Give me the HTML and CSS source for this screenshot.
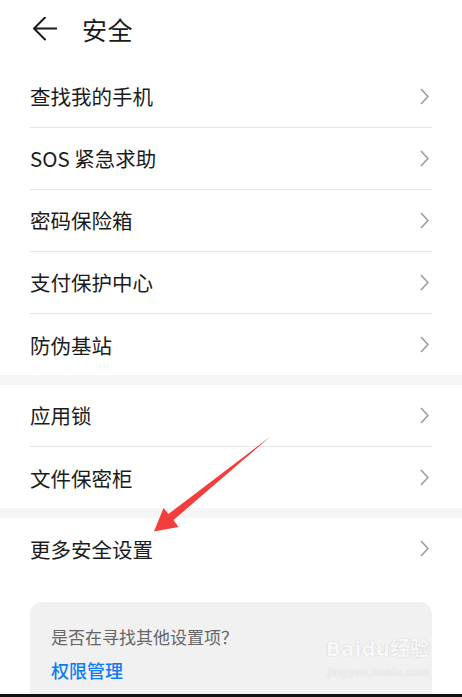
FILE: index.html
```html
<!DOCTYPE html>
<html lang="zh">
<head>
<meta charset="utf-8">
<title>安全</title>
<link rel="stylesheet" href="styles.css">
</head>
<body>
<div class="page">
  <header class="header">
    <svg class="back" width="24" height="24" viewBox="0 0 24 24" aria-hidden="true">
      <path d="M1 11.5 H23.5 M12 0.5 L1 11.5 L12 22.5" fill="none" stroke="#1b1b1b" stroke-width="2" stroke-linecap="round" stroke-linejoin="round"/>
    </svg>
    <h1 class="title">安全</h1>
  </header>

  <section class="group">
    <div class="row"><span class="label">查找我的手机</span><svg class="chev" width="9" height="17" viewBox="0 0 9 17"><path d="M1 1 L8 8.5 L1 16" fill="none" stroke="#9b9b9b" stroke-width="1.6"/></svg></div>
    <div class="row"><span class="label">SOS 紧急求助</span><svg class="chev" width="9" height="17" viewBox="0 0 9 17"><path d="M1 1 L8 8.5 L1 16" fill="none" stroke="#9b9b9b" stroke-width="1.6"/></svg></div>
    <div class="row"><span class="label">密码保险箱</span><svg class="chev" width="9" height="17" viewBox="0 0 9 17"><path d="M1 1 L8 8.5 L1 16" fill="none" stroke="#9b9b9b" stroke-width="1.6"/></svg></div>
    <div class="row"><span class="label">支付保护中心</span><svg class="chev" width="9" height="17" viewBox="0 0 9 17"><path d="M1 1 L8 8.5 L1 16" fill="none" stroke="#9b9b9b" stroke-width="1.6"/></svg></div>
    <div class="row"><span class="label">防伪基站</span><svg class="chev" width="9" height="17" viewBox="0 0 9 17"><path d="M1 1 L8 8.5 L1 16" fill="none" stroke="#9b9b9b" stroke-width="1.6"/></svg></div>
  </section>
  <div class="band"></div>
  <section class="group">
    <div class="row"><span class="label">应用锁</span><svg class="chev" width="9" height="17" viewBox="0 0 9 17"><path d="M1 1 L8 8.5 L1 16" fill="none" stroke="#9b9b9b" stroke-width="1.6"/></svg></div>
    <div class="row"><span class="label">文件保密柜</span><svg class="chev" width="9" height="17" viewBox="0 0 9 17"><path d="M1 1 L8 8.5 L1 16" fill="none" stroke="#9b9b9b" stroke-width="1.6"/></svg></div>
  </section>
  <div class="band"></div>
  <section class="group">
    <div class="row"><span class="label">更多安全设置</span><svg class="chev" width="9" height="17" viewBox="0 0 9 17"><path d="M1 1 L8 8.5 L1 16" fill="none" stroke="#9b9b9b" stroke-width="1.6"/></svg></div>
  </section>

  <div class="card">
    <p class="hint">是否在寻找其他设置项？</p>
    <a class="link">权限管理</a>
    <div class="watermark">
      <span class="wm-main">Bai<span class="wm-du">du</span>经验</span>
      <span class="wm-sub">jingyan.baidu.com</span>
    </div>
  </div>

  <svg class="annot" width="462" height="697" viewBox="0 0 462 697" aria-hidden="true">
    <polygon points="271,436 173.5,520 178.5,527 154,531.5 163.5,508 168.5,514" fill="#f53d3d"/>
  </svg>
  <div class="navbar"></div>
</div>
</body>
</html>
```
FILE: styles.css
```css
* { box-sizing: border-box; }
html, body {
  margin: 0;
  padding: 0;
  background: #ffffff;
  overflow: hidden;
}
body {
  font-family: "Noto Sans CJK SC", "Noto Sans", sans-serif;
  color: #1b1b1b;
}
.page {
  position: relative;
  width: 462px;
  height: 697px;
  overflow: hidden;
}
.header {
  display: flex;
  align-items: center;
  height: 58px;
  padding-left: 33px;
  margin-bottom: 8px;
}
.back { display: block; }
.title {
  margin: 0 0 0 25px;
  font-size: 25px;
  font-weight: 400;
  line-height: 30px;
  letter-spacing: 0.5px;
}
.group {
  padding: 0 30px;
}
.row {
  display: flex;
  align-items: center;
  justify-content: space-between;
  height: 62px;
  border-bottom: 1px solid #e6e6e6;
  padding-bottom: 1px;
}
.row:last-child { border-bottom: none; height: 61px; padding-bottom: 0; }
.label {
  font-size: 20.5px;
  line-height: 26px;
  color: #1b1b1b;
}
.chev {
  display: block;
  margin-right: 3px;
}
.band {
  height: 10px;
  background: #f5f5f5;
}
.card {
  position: relative;
  margin: 23px 30px 0;
  padding: 24px 21px 40px;
  background: #f1f1f1;
  border-radius: 12px;
}
.hint {
  margin: 0;
  font-size: 17px;
  line-height: 22px;
  color: #666666;
}
.link {
  display: block;
  margin-top: 11px;
  font-size: 18px;
  line-height: 22px;
  font-weight: 500;
  color: #0b7cf3;
}
.watermark {
  position: absolute;
  right: 2px;
  top: 34px;
  display: flex;
  flex-direction: column;
  align-items: flex-end;
  font-family: "DejaVu Sans", "Noto Sans CJK SC", sans-serif;
  color: #f7f7f7;
  text-shadow: 0 0 1px #d0d0d0, 0 0 1px #d0d0d0;
}
.wm-main {
  font-size: 20px;
  font-weight: 700;
  line-height: 26px;
}
.wm-sub {
  font-family: "DejaVu Serif", serif;
  font-size: 11px;
  line-height: 14px;
  margin-top: 4px;
}
.annot {
  position: absolute;
  left: 0;
  top: 0;
  pointer-events: none;
}
.navbar {
  position: absolute;
  left: 0;
  right: 0;
  bottom: 0;
  height: 3px;
  background: #111111;
}
```
